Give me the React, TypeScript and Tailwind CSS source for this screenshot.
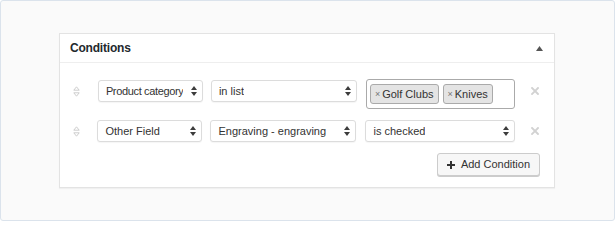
import React from "react";

const font = { fontFamily: '"Liberation Sans", Arial, sans-serif' };

const SelectArrows = ({ color = "#3c3c3c" }: { color?: string }) => (
  <svg width="6" height="10" viewBox="0 0 6 10" className="shrink-0">
    <path d="M3 0 L6 4 H0 Z" fill={color} />
    <path d="M0 6 H6 L3 10 Z" fill={color} />
  </svg>
);

const DragHandle = () => (
  <svg width="7" height="11" viewBox="0 0 7 11">
    <path d="M3.5 0.8 L6.2 4.2 H0.8 Z" fill="none" stroke="#c8c8c8" strokeWidth="0.9" />
    <path d="M0.8 6.8 H6.2 L3.5 10.2 Z" fill="none" stroke="#c8c8c8" strokeWidth="0.9" />
  </svg>
);

const RemoveIcon = () => (
  <svg width="8" height="8" viewBox="0 0 8 8">
    <path d="M1 1 L7 7 M7 1 L1 7" stroke="#d2d2d2" strokeWidth="1.9" strokeLinecap="square" />
  </svg>
);

interface SelectProps {
  label: string;
  width: string;
  tight?: boolean;
}

const FakeSelect: React.FC<SelectProps> = ({ label, width, tight }) => (
  <div
    className={`${width} h-[22px] flex items-center justify-between pl-[7px] pr-[5px] bg-white border border-[#dcdcdc] rounded-[3px] shadow-[0_1px_1px_rgba(0,0,0,0.04)] text-[11px] text-[#333]`}
  >
    <span className={tight ? "truncate tracking-[-0.35px]" : "truncate"}>{label}</span>
    <SelectArrows />
  </div>
);

const Tag = ({ label }: { label: string }) => (
  <div className="h-[20px] flex items-center gap-[2px] px-[4px] bg-[#e4e4e4] border border-[#aaaaaa] rounded-[3px] text-[11px] text-[#333]">
    <span className="text-[9px] text-[#777] leading-none">×</span>
    <span>{label}</span>
  </div>
);

export default function App() {
  return (
    <div className="w-[616px] h-[241px] bg-white" style={font}>
      <div className="w-[615px] h-[221px] bg-[#fafafa] border border-[#dbe3ec] rounded-[3px] pt-[32px] pl-[58px]">
        <div className="w-[496px] h-[155px] bg-white border border-[#e3e3e3] shadow-[0_1px_1px_rgba(0,0,0,0.04)]">
          {/* header */}
          <div className="h-[29px] flex items-center justify-between pl-[10px] pr-[10px] border-b border-[#eeeeee]">
            <h3 className="text-[12px] font-bold tracking-[-0.2px] text-[#23282d]">Conditions</h3>
            <svg width="7" height="5" viewBox="0 0 7 5" className="mr-[1px]">
              <path d="M0 5 L3.5 0 L7 5 Z" fill="#555" />
            </svg>
          </div>

          {/* body */}
          <div className="pt-[16px] pb-[12px]">
            <div className="flex items-start">
              <div className="w-[38px] h-[24px] flex items-center pl-[13px]">
                <DragHandle />
              </div>
              <div className="pt-[1px] flex gap-[8px]">
                <FakeSelect label="Product category" width="w-[105px]" tight />
                <FakeSelect label="in list" width="w-[146px]" />
              </div>
              <div className="ml-[9px] w-[150px] h-[30px] flex items-center gap-[4px] px-[3px] bg-white border border-[#aaaaaa] rounded-[3px]">
                <Tag label="Golf Clubs" />
                <Tag label="Knives" />
              </div>
              <div className="w-[39px] h-[24px] flex items-center pl-[16px]">
                <RemoveIcon />
              </div>
            </div>

            <div className="flex items-start mt-[11px]">
              <div className="w-[38px] h-[22px] flex items-center pl-[13px]">
                <DragHandle />
              </div>
              <div className="flex gap-[8px]">
                <FakeSelect label="Other Field" width="w-[105px]" />
                <FakeSelect label="Engraving - engraving" width="w-[146px]" />
              </div>
              <div className="ml-[9px]">
                <FakeSelect label="is checked" width="w-[150px]" />
              </div>
              <div className="w-[39px] h-[22px] flex items-center pl-[16px]">
                <RemoveIcon />
              </div>
            </div>

            <div className="flex justify-end pr-[14px] mt-[11px]">
              <button className="h-[23px] flex items-center gap-[6px] pl-[9px] pr-[9px] bg-[#f7f7f7] border border-[#cccccc] rounded-[3px] shadow-[0_1px_0_#ccc] text-[11px] text-[#333]">
                <svg width="8" height="8" viewBox="0 0 8 8">
                  <path d="M4 0 V8 M0 4 H8" stroke="#333" strokeWidth="2" />
                </svg>
                <span>Add Condition</span>
              </button>
            </div>
          </div>
        </div>
      </div>
    </div>
  );
}
